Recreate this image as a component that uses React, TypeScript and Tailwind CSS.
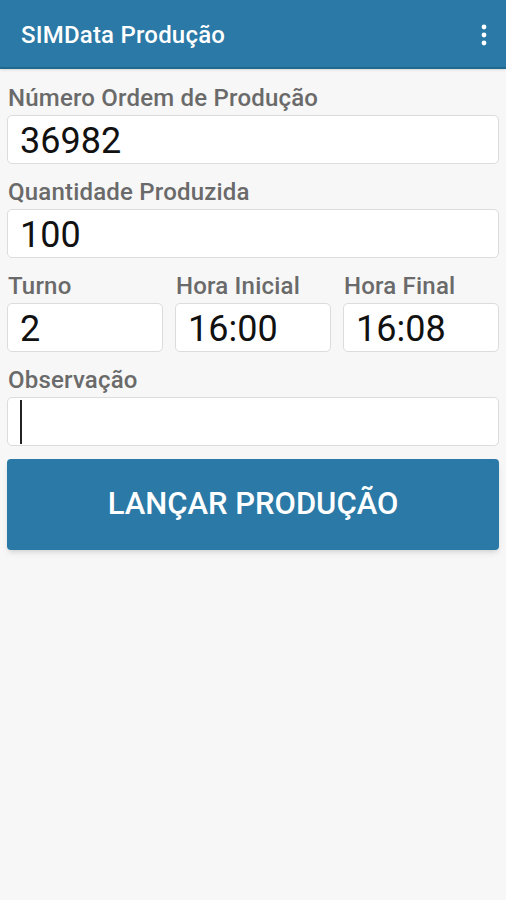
import React from "react";

const font = { fontFamily: "Roboto, 'Noto Sans', sans-serif" };

function Label({ children }: { children: React.ReactNode }) {
  return (
    <div className="text-[24px] leading-[26px] font-medium text-[#6a6a6a] pl-[1px] tracking-[0.2px]">{children}</div>
  );
}

function Field({ value, cursor }: { value?: string; cursor?: boolean }) {
  return (
    <div className="h-[49px] bg-white border border-[#dcdcdc] rounded-[5px] flex items-center pl-[12px] pt-[3px] text-[36px] text-[#111] leading-none">
      {value}
      {cursor && <div className="w-[2px] h-[44px] bg-[#222] -mt-[3px]" />}
    </div>
  );
}

export default function App() {
  return (
    <div style={font} className="w-[506px] h-[900px] bg-[#f7f7f7] flex flex-col">
      <div className="h-[69px] bg-[#2a79a6] border-b-[2px] border-[#1f6890] flex items-center justify-between pl-[21px] pr-[18px] pt-[2px] shadow-sm">
        <div className="text-white text-[24px] font-medium tracking-[0.2px]">SIMData Produção</div>
        <svg width="8" height="22" viewBox="0 0 8 22">
          <circle cx="4" cy="3" r="2.4" fill="white" />
          <circle cx="4" cy="11" r="2.4" fill="white" />
          <circle cx="4" cy="19" r="2.4" fill="white" />
        </svg>
      </div>
      <div className="px-[7px] pt-[16px] flex flex-col">
        <Label>Número Ordem de Produção</Label>
        <div className="mt-[4px]"><Field value="36982" /></div>
        <div className="mt-[15px]"><Label>Quantidade Produzida</Label></div>
        <div className="mt-[4px]"><Field value="100" /></div>
        <div className="mt-[15px] grid grid-cols-3 gap-x-[12px]">
          <div className="flex flex-col">
            <Label>Turno</Label>
            <div className="mt-[4px]"><Field value="2" /></div>
          </div>
          <div className="flex flex-col">
            <Label>Hora Inicial</Label>
            <div className="mt-[4px]"><Field value="16:00" /></div>
          </div>
          <div className="flex flex-col">
            <Label>Hora Final</Label>
            <div className="mt-[4px]"><Field value="16:08" /></div>
          </div>
        </div>
        <div className="mt-[15px]"><Label>Observação</Label></div>
        <div className="mt-[4px]"><Field cursor /></div>
        <button className="mt-[13px] h-[91px] bg-[#2a79a6] rounded-[4px] text-white text-[31px] font-medium shadow-md">
          LANÇAR PRODUÇÃO
        </button>
      </div>
    </div>
  );
}
